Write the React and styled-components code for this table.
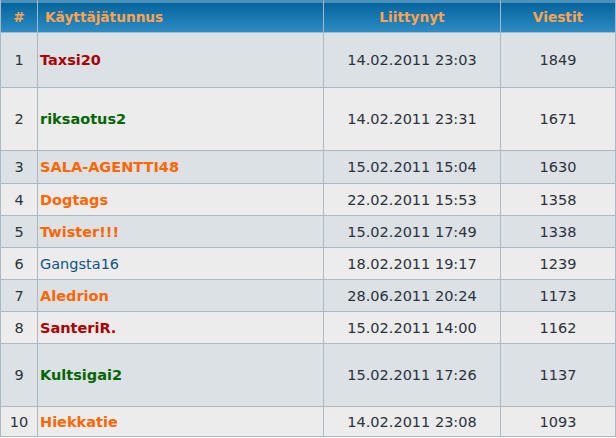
import React from "react";
import styled, { createGlobalStyle } from "styled-components";

const Global = createGlobalStyle`
  html, body { margin: 0; padding: 0; background: #ffffff; }
  body { font-family: "DejaVu Sans", Verdana, sans-serif; }
`;

const Table = styled.div`
  display: grid;
  width: 616px;
  box-sizing: border-box;
  grid-template-columns: 36px 285px 176px 114px;
  grid-template-rows: 32px 54px 62px 32px 31px 31px 31px 31px 31px 62px 29px;
  gap: 1px;
  padding: 0 1px 1px 1px;
  background: #a9b8c3;
`;

const Row = styled.div`
  display: contents;
`;

const HeadCell = styled.div`
  display: flex;
  align-items: center;
  justify-content: ${(p) => (p.$left ? "flex-start" : "center")};
  padding-left: ${(p) => (p.$left ? "7px" : "0")};
  padding-top: 1px;
  background: linear-gradient(
    to bottom,
    #4b8fbb 0px,
    #4b8fbb 3px,
    #04649d 3px,
    #2d8cc4 100%
  );
  color: #ffa34f;
  font-weight: bold;
  font-size: 13.7px;
`;

const Cell = styled.div`
  display: flex;
  align-items: center;
  justify-content: ${(p) => (p.$left ? "flex-start" : "center")};
  padding-left: ${(p) => (p.$left ? "2px" : "0")};
  background: ${(p) => (p.$alt ? "#ececec" : "#dce1e5")};
  color: #2b323d;
  font-size: 14.5px;
  white-space: nowrap;
`;

const Name = styled.span`
  color: ${(p) => p.$color};
  font-weight: ${(p) => (p.$plain ? "normal" : "bold")};
`;

const COLORS = {
  red: "#aa0000",
  green: "#006600",
  orange: "#ff6600",
  blue: "#105289",
};

const rows = [
  { n: 1, name: "Taxsi20", c: "red", d: "14.02.2011 23:03", p: 1849 },
  { n: 2, name: "riksaotus2", c: "green", d: "14.02.2011 23:31", p: 1671 },
  { n: 3, name: "SALA-AGENTTI48", c: "orange", d: "15.02.2011 15:04", p: 1630 },
  { n: 4, name: "Dogtags", c: "orange", d: "22.02.2011 15:53", p: 1358 },
  { n: 5, name: "Twister!!!", c: "orange", d: "15.02.2011 17:49", p: 1338 },
  { n: 6, name: "Gangsta16", c: "blue", plain: true, d: "18.02.2011 19:17", p: 1239 },
  { n: 7, name: "Aledrion", c: "orange", d: "28.06.2011 20:24", p: 1173 },
  { n: 8, name: "SanteriR.", c: "red", d: "15.02.2011 14:00", p: 1162 },
  { n: 9, name: "Kultsigai2", c: "green", d: "15.02.2011 17:26", p: 1137 },
  { n: 10, name: "Hiekkatie", c: "orange", d: "14.02.2011 23:08", p: 1093 },
];

export default function App() {
  return (
    <>
      <Global />
      <Table>
        <Row>
          <HeadCell>#</HeadCell>
          <HeadCell $left>Käyttäjätunnus</HeadCell>
          <HeadCell>Liittynyt</HeadCell>
          <HeadCell>Viestit</HeadCell>
        </Row>
        {rows.map((r, i) => {
          const alt = i % 2 === 1;
          return (
            <Row key={r.n}>
              <Cell $alt={alt}>{r.n}</Cell>
              <Cell $alt={alt} $left>
                <Name $color={COLORS[r.c]} $plain={r.plain}>
                  {r.name}
                </Name>
              </Cell>
              <Cell $alt={alt}>{r.d}</Cell>
              <Cell $alt={alt}>{r.p}</Cell>
            </Row>
          );
        })}
      </Table>
    </>
  );
}
